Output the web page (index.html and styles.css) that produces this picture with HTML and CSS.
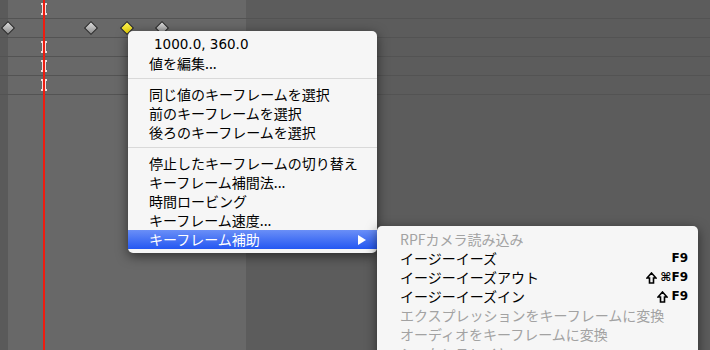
FILE: index.html
```html
<!DOCTYPE html>
<html lang="ja">
<head>
    <meta charset="UTF-8">
    <title>キーフレーム補助</title>
    <link rel="stylesheet" href="styles.css">
</head>
<body>
    <div class="timeline">
        <div class="col strip">
            <div class="row"></div><div class="row"></div><div class="row"></div><div class="row"></div><div class="row"></div>
        </div>
        <div class="col layers">
            <div class="row"></div><div class="row"></div><div class="row"></div><div class="row"></div><div class="row"></div>
        </div>
        <div class="col graph">
            <div class="row"></div><div class="row"></div><div class="row"></div><div class="row"></div><div class="row"></div>
        </div>

        <!-- keyframes -->
        <span class="ibeam" style="top: 3px"></span>
        <span class="ibeam" style="top: 41px"></span>
        <span class="ibeam" style="top: 60px"></span>
        <span class="ibeam" style="top: 79px"></span>
        <div class="playhead"></div>
        <span class="key" style="left: 3px"></span>
        <span class="key" style="left: 86px"></span>
        <span class="key selected" style="left: 122px"></span>
        <span class="key" style="left: 157px"></span>

        <div class="menu">
            <div class="item value">1000.0, 360.0</div>
            <div class="item">値を編集...</div>
            <div class="sep"></div>
            <div class="item">同じ値のキーフレームを選択</div>
            <div class="item">前のキーフレームを選択</div>
            <div class="item">後ろのキーフレームを選択</div>
            <div class="sep"></div>
            <div class="item">停止したキーフレームの切り替え</div>
            <div class="item">キーフレーム補間法...</div>
            <div class="item">時間ロービング</div>
            <div class="item">キーフレーム速度...</div>
            <div class="item active">キーフレーム補助<span class="arrow"></span></div>
        </div>

        <div class="submenu">
            <div class="item disabled">RPFカメラ読み込み</div>
            <div class="item">イージーイーズ<span class="keys">F9</span></div>
            <div class="item">イージーイーズアウト
                <span class="keys">
                    <svg class="shift" width="11" height="12" viewBox="0 0 11 12"><path d="M5.5 1 L10 6 H7.5 V11 H3.5 V6 H1 Z" fill="none" stroke="#000" stroke-width="1.6" stroke-linejoin="miter"/></svg>⌘F9
                </span>
            </div>
            <div class="item">イージーイーズイン
                <span class="keys">
                    <svg class="shift" width="11" height="12" viewBox="0 0 11 12"><path d="M5.5 1 L10 6 H7.5 V11 H3.5 V6 H1 Z" fill="none" stroke="#000" stroke-width="1.6" stroke-linejoin="miter"/></svg>F9
                </span>
            </div>
            <div class="item disabled">エクスプレッションをキーフレームに変換</div>
            <div class="item disabled">オーディオをキーフレームに変換</div>
            <div class="item disabled">シーケンスレイヤー...</div>
        </div>
    </div>
</body>
</html>
```

FILE: styles.css
```css
body {
    margin: 0;
    background: #5c5c5c;
    font-family: "Noto Sans CJK JP", "DejaVu Sans", sans-serif;
    overflow: hidden;
}
.timeline {
    display: flex;
    position: relative;
    width: 710px;
    height: 350px;
    overflow: hidden;
}
.col {
    height: 100%;
}
.strip {
    width: 8px;
    background: #5a5a5a;
}
.layers {
    width: 238px;
    background: #686868;
}
.graph {
    flex: 1;
    background: #5c5c5c;
}
.row {
    height: 18px;
    border-bottom: 1px solid #535353;
}

.playhead {
    position: absolute;
    left: 43px;
    top: 0;
    width: 2px;
    height: 350px;
    background: #ee1c10;
}
.ibeam {
    position: absolute;
    left: 41px;
    width: 6px;
    height: 12px;
    border-top: 2px solid #f2dede;
    border-bottom: 2px solid #f2dede;
    box-sizing: border-box;
}
.ibeam::before {
    content: "";
    position: absolute;
    left: 1px;
    top: 0;
    width: 4px;
    height: 8px;
    background: #f2dede;
}
.key {
    position: absolute;
    top: 23px;
    width: 8px;
    height: 8px;
    transform: rotate(45deg);
    background: linear-gradient(135deg, #dcdcdc, #8c8c8c);
    border: 1px solid #2e2e2e;
}
.key.selected {
    background: linear-gradient(135deg, #fff45a, #e8d000);
}

.menu, .submenu {
    position: absolute;
    background: #f6f6f6;
    border-radius: 5px;
    box-shadow: 0 3px 12px rgba(0, 0, 0, 0.55);
    font-size: 14px;
    color: #000;
}
.menu {
    left: 128px;
    top: 31px;
    width: 249px;
    padding: 4px 0 4px;
}
.submenu {
    left: 377px;
    top: 226px;
    width: 321px;
    height: 140px;
    padding-top: 4px;
    border-radius: 5px 5px 0 0;
}
.item {
    display: flex;
    align-items: center;
    height: 19px;
    padding-left: 21px;
    line-height: 19px;
    white-space: nowrap;
}
.submenu .item {
    padding-left: 23px;
    padding-right: 10px;
}
.item.value {
    padding-left: 26px;
    font-family: "DejaVu Sans", sans-serif;
    font-size: 13.5px;
}
.sep {
    height: 1px;
    margin: 5px 0 6px;
    background: #d9d9d9;
}
.item.active {
    color: #fff;
    background: linear-gradient(#6a8ff7, #2457f2);
}
.arrow {
    margin-left: auto;
    margin-right: 11px;
    width: 0;
    height: 0;
    border-top: 5px solid transparent;
    border-bottom: 5px solid transparent;
    border-left: 8px solid #fff;
}
.item.disabled {
    color: #a2a2a2;
}
.keys {
    display: flex;
    align-items: center;
    gap: 2px;
    margin-left: auto;
    font-family: "DejaVu Sans", sans-serif;
    font-weight: bold;
    font-size: 12px;
}
.shift {
    margin-right: 1px;
}
```
